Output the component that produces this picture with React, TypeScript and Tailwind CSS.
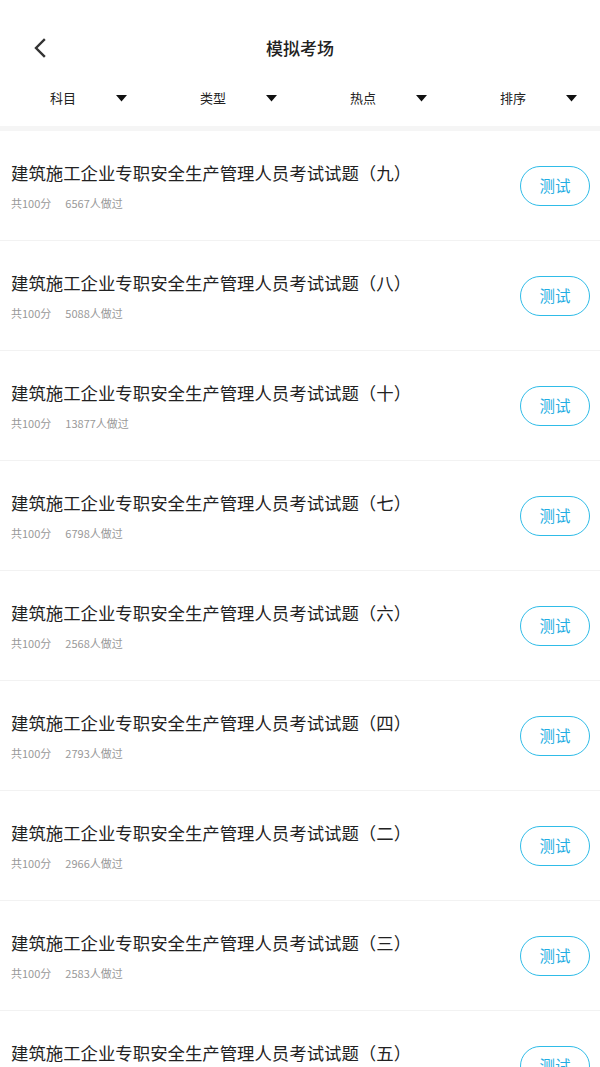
import React from 'react';

const exams = [
  { no: '九', count: 6567 },
  { no: '八', count: 5088 },
  { no: '十', count: 13877 },
  { no: '七', count: 6798 },
  { no: '六', count: 2568 },
  { no: '四', count: 2793 },
  { no: '二', count: 2966 },
  { no: '三', count: 2583 },
  { no: '五', count: 3012 },
];

const filters = ['科目', '类型', '热点', '排序'];

const font = { fontFamily: '"Noto Sans CJK SC", "Noto Sans", sans-serif' };

export default function App() {
  return (
    <div className="w-[600px] h-[1067px] overflow-hidden bg-white" style={font}>
      {/* 顶部导航 */}
      <div className="h-[70px] pt-[26px] relative flex justify-center">
        <button className="absolute left-[30px] top-[36px] text-[#333]">
          <svg width="20" height="24" viewBox="0 0 20 24" fill="none">
            <path d="M14 4 L6 12 L14 20" stroke="#333" strokeWidth="2.4" strokeLinecap="square" />
          </svg>
        </button>
        <h1 className="text-[17px] leading-[44px] font-medium text-[#222] h-[44px]">模拟考场</h1>
      </div>

      {/* 筛选条 */}
      <div className="grid grid-cols-4 h-[56px]">
        {filters.map((f) => (
          <div key={f} className="flex items-center justify-between pl-[50px] pr-[23px]">
            <span className="text-[13px] text-[#222]">{f}</span>
            <svg width="11" height="7" viewBox="0 0 11 7">
              <path d="M0 0 H11 L5.5 6.5 Z" fill="#111" />
            </svg>
          </div>
        ))}
      </div>
      <div className="h-[5px] bg-[#f5f5f5]" />

      {/* 列表 */}
      <div>
        {exams.map((e) => (
          <div key={e.no} className="h-[110px] border-b border-[#f2f2f2] flex items-center justify-between pl-[11px] pr-[10px]">
            <div className="flex flex-col">
              <span className="text-[17.4px] leading-[26px] text-[#222]">
                建筑施工企业专职安全生产管理人员考试试题（{e.no}）
              </span>
              <span className="mt-[9px] text-[11px] leading-[16px] text-[#999]">
                共100分<span className="ml-[14px]">{e.count}人做过</span>
              </span>
            </div>
            <button className="w-[70px] h-[40px] rounded-full border-[1.5px] border-[#2fbce8] text-[#1faee3] text-[15.5px] flex items-center justify-center">
              测试
            </button>
          </div>
        ))}
      </div>
    </div>
  );
}
